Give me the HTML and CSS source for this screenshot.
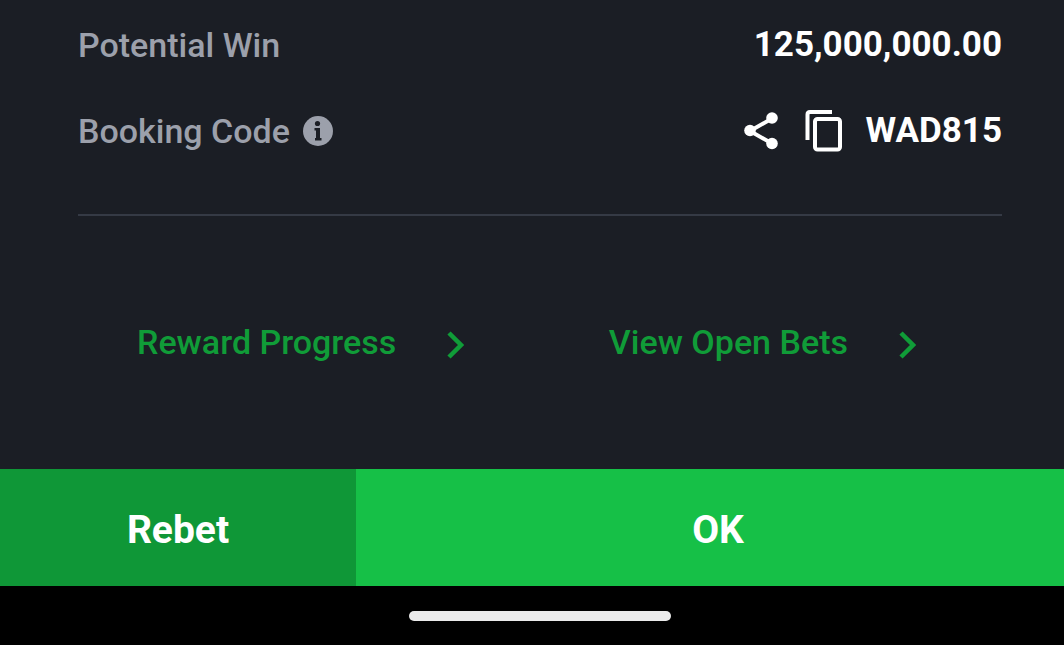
FILE: index.html
```
<!DOCTYPE html>
<html lang="en">
<head>
<meta charset="utf-8">
<meta name="viewport" content="width=device-width, initial-scale=1">
<title>Bet confirmation</title>
<link rel="stylesheet" href="styles.css">
</head>
<body>
<main class="sheet">
  <dl class="details">
    <div class="row">
      <dt class="label">Potential Win</dt>
      <dd class="value">125,000,000.00</dd>
    </div>
    <div class="row">
      <dt class="label">Booking Code
        <button class="icon-button" type="button" aria-label="About booking code">
          <svg width="30" height="30" viewBox="0 0 30 30"><circle cx="15" cy="15" r="15" fill="#9ca0ab"/><circle cx="14.500" cy="7.500" r="2.600" fill="#1b1e25"/><path d="M11.500 12h5.500v10h1.500v2.500H12V22h1v-7.500h-1.500z" fill="#1b1e25"/></svg>
        </button>
      </dt>
      <dd class="value">
        <button class="icon-button share" type="button" aria-label="Share">
          <svg width="36" height="38" viewBox="0 0 36 38"><path d="M29 6.500 7 19l22 12.500" fill="none" stroke="#fff" stroke-width="4"/><circle cx="29" cy="6" r="5.800" fill="#fff"/><circle cx="7" cy="18.500" r="5.800" fill="#fff"/><circle cx="29" cy="31.500" r="5.800" fill="#fff"/></svg>
        </button>
        <button class="icon-button copy" type="button" aria-label="Copy code">
          <svg width="38" height="42" viewBox="0 0 38 42" fill="none" stroke="#fff" stroke-width="4"><path d="M2.500 30V4.500q0-2.500 2.500-2.500H27"/><rect x="10" y="9" width="25" height="30.500" rx="2.500"/></svg>
        </button>
        WAD815
      </dd>
    </div>
  </dl>
  <nav class="links">
    <a class="link" href="#rewards">Reward Progress
      <svg class="chevron" width="18" height="28" viewBox="0 0 18 28"><path d="m3 2 12 12L3 26" fill="none" stroke="currentColor" stroke-width="4.500"/></svg></a>
    <a class="link" href="#bets">View Open Bets
      <svg class="chevron" width="18" height="28" viewBox="0 0 18 28"><path d="m3 2 12 12L3 26" fill="none" stroke="currentColor" stroke-width="4.500"/></svg></a>
  </nav>
</main>
<div class="actions">
  <button class="action rebet" type="button">Rebet</button>
  <button class="action ok" type="button">OK</button>
</div>
<footer class="system-bar"><div class="handle"></div></footer>
</body>
</html>
```
FILE: styles.css
```
* { box-sizing: border-box; }
body {
  margin: 0;
  min-height: 100vh;
  display: flex;
  flex-direction: column;
  background: #000;
  color: #fff;
  font-family: Roboto, "Liberation Sans", sans-serif;
  font-size: 34px;
  line-height: 40px;
}
button { border: 0; padding: 0; color: inherit; font: inherit; cursor: pointer; }
svg { display: block; }
.sheet { padding: 24px 62px 0 78px; background: #1b1e25; }
.details { margin: 0; padding-bottom: 62px; border-bottom: 2px solid #353a45; display: grid; gap: 44px; }
.row { display: flex; justify-content: space-between; align-items: center; }
.label { display: flex; align-items: center; gap: 13px; color: #9ca0ab; font-weight: 500; }
.value { margin: 0; display: flex; align-items: center; font-size: 35px; line-height: 42px; font-weight: 700; }
.icon-button { display: flex; background: none; }
.share { margin-right: 26px; }
.copy { margin-right: 23px; }
.links { display: flex; justify-content: space-between; padding: 106px 86px 107px 59px; }
.link { display: flex; align-items: center; gap: 50px; color: #109c38; font-weight: 500; text-decoration: none; }
.chevron { box-sizing: content-box; padding-top: 6px; }
.actions { display: grid; grid-template-columns: 356fr 708fr; }
.action { padding: 39px 0 33px; font-size: 39px; line-height: 45px; font-weight: 700; }
.rebet { background: #0f9737; }
.ok { padding-left: 16px; background: #16c047; }
.system-bar { display: flex; justify-content: center; padding: 25px 0 24px 16px; background: #000; }
.handle { width: 262px; height: 10px; border-radius: 5px; background: #ebebeb; }
```
